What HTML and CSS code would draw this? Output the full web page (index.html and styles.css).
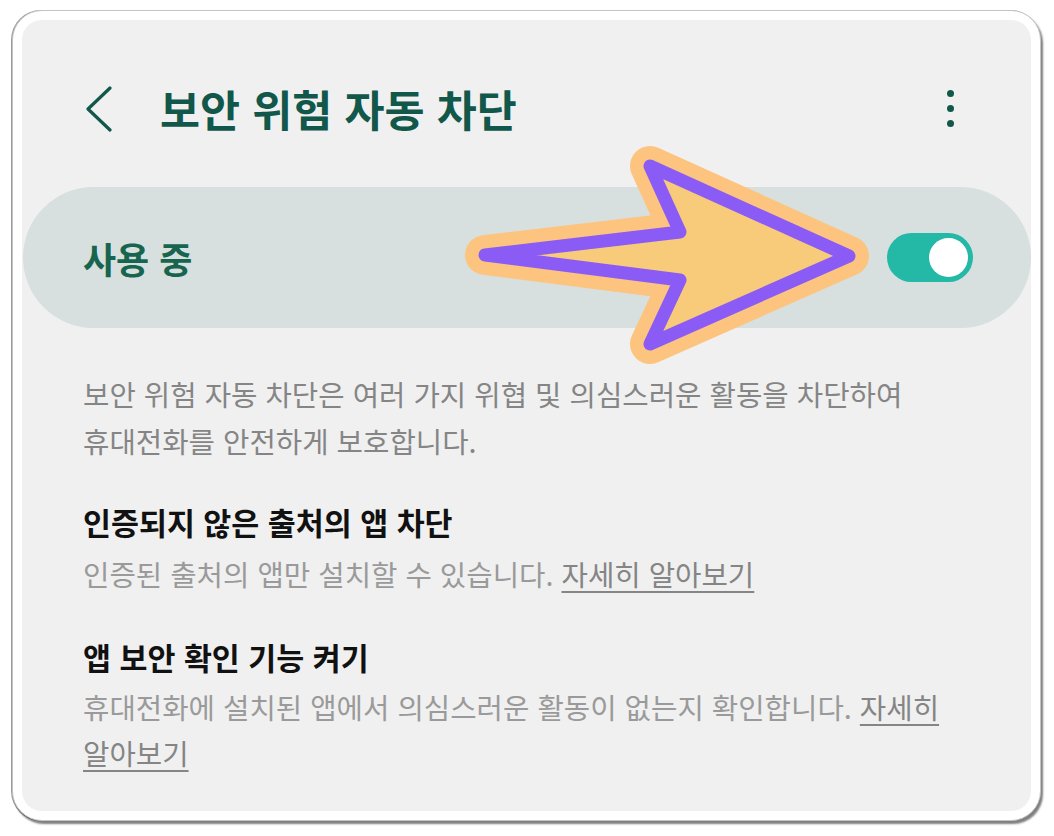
FILE: index.html
```html
<!DOCTYPE html>
<html lang="ko">
<head>
<meta charset="utf-8">
<title>보안 위험 자동 차단</title>
<link rel="stylesheet" href="styles.css">
</head>
<body>
<div class="frame">
  <div class="panel">
    <header class="header">
      <svg class="back" width="30" height="48" viewBox="0 0 30 48">
        <path d="M25 4 L3 25 L25 46" fill="none" stroke="#11574a" stroke-width="3.2" stroke-linecap="round" stroke-linejoin="round"/>
      </svg>
      <h1 class="title">보안 위험 자동 차단</h1>
      <div class="kebab"><span></span><span></span><span></span></div>
    </header>
    <div class="pill">
      <span class="pill-label">사용 중</span>
      <span class="toggle"><span class="thumb"></span></span>
    </div>
    <p class="desc">보안 위험 자동 차단은 여러 가지 위협 및 의심스러운 활동을 차단하여<br>휴대전화를 안전하게 보호합니다.</p>
    <div class="item">
      <h2 class="item-title">인증되지 않은 출처의 앱 차단</h2>
      <p class="item-sub">인증된 출처의 앱만 설치할 수 있습니다. <span class="link">자세히 알아보기</span></p>
    </div>
    <div class="item">
      <h2 class="item-title">앱 보안 확인 기능 켜기</h2>
      <p class="item-sub">휴대전화에 설치된 앱에서 의심스러운 활동이 없는지 확인합니다. <span class="link">자세히<br>알아보기</span></p>
    </div>
  </div>
</div>
<svg class="arrow" width="1054" height="836" viewBox="0 0 1054 836">
  <path d="M485 255 L680 232 L650 166 L849 256 L650 344 L680 280 Z" fill="#f8cb7b" stroke="#fcc47e" stroke-width="40" stroke-linejoin="round"/>
  <path d="M485 255 L680 232 L650 166 L849 256 L650 344 L680 280 Z" fill="#f8cb7b" stroke="#8b5bf6" stroke-width="13" stroke-linejoin="round"/>
</svg>
</body>
</html>
```
FILE: styles.css
```css
html, body {
  margin: 0;
  padding: 0;
  background: #ffffff;
}
body {
  font-family: "Noto Sans CJK KR", "Noto Sans", sans-serif;
  position: relative;
  width: 1054px;
  height: 836px;
  overflow: hidden;
}
.frame {
  box-sizing: border-box;
  margin: 10px 0 0 12px;
  width: 1029px;
  height: 811px;
  padding: 9px;
  background: #ffffff;
  border: 1px solid #c4c4c4;
  border-radius: 30px;
  box-shadow: 2px 3px 2px rgba(0, 0, 0, 0.5), -1px 0 0 #9a9a9a;
}
.panel {
  box-sizing: border-box;
  height: 100%;
  background: #f0f0f0;
  border-radius: 20px;
  padding-top: 58px;
}
.header {
  display: flex;
  align-items: center;
  height: 60px;
  padding-left: 63px;
  padding-right: 77px;
  margin-bottom: 49px;
}
.back {
  flex: none;
}
.title {
  margin: 0 0 0 45px;
  font-size: 43.5px;
  font-weight: 700;
  color: #11574a;
  flex: 1;
}
.kebab {
  display: flex;
  flex-direction: column;
  gap: 8px;
}
.kebab span {
  display: block;
  width: 7px;
  height: 7px;
  border-radius: 50%;
  background: #11574a;
}
.pill {
  display: flex;
  align-items: center;
  justify-content: space-between;
  height: 141px;
  margin-left: 1px;
  background: #d7e0df;
  border-radius: 71px;
  padding: 0 58px 0 60px;
}
.pill-label {
  font-size: 36px;
  font-weight: 700;
  color: #17654f;
}
.toggle {
  position: relative;
  display: block;
  width: 86px;
  height: 49px;
  border-radius: 25px;
  background: #24b8a6;
}
.thumb {
  position: absolute;
  right: 5px;
  top: 5px;
  width: 39px;
  height: 39px;
  border-radius: 50%;
  background: #ffffff;
}
.desc {
  margin: 42px 0 0 0;
  padding-left: 61px;
  font-size: 28.7px;
  line-height: 47px;
  color: #858585;
}
.item {
  padding-left: 61px;
}
.item-title {
  margin: 38px 0 0 0;
  font-size: 30.4px;
  line-height: 40px;
  font-weight: 700;
  color: #111111;
}
.item-sub {
  margin: 8px 0 0 0;
  font-size: 28.7px;
  line-height: 47px;
  color: #9a9a9a;
}
.item + .item .item-title {
  margin-top: 40px;
}
.item + .item .item-sub {
  margin-top: 7px;
  line-height: 46px;
}
.link {
  color: #858585;
  text-decoration: underline;
  text-decoration-thickness: 2px;
  text-underline-offset: 5px;
}
.arrow {
  position: absolute;
  left: 0;
  top: 0;
  pointer-events: none;
}
```
